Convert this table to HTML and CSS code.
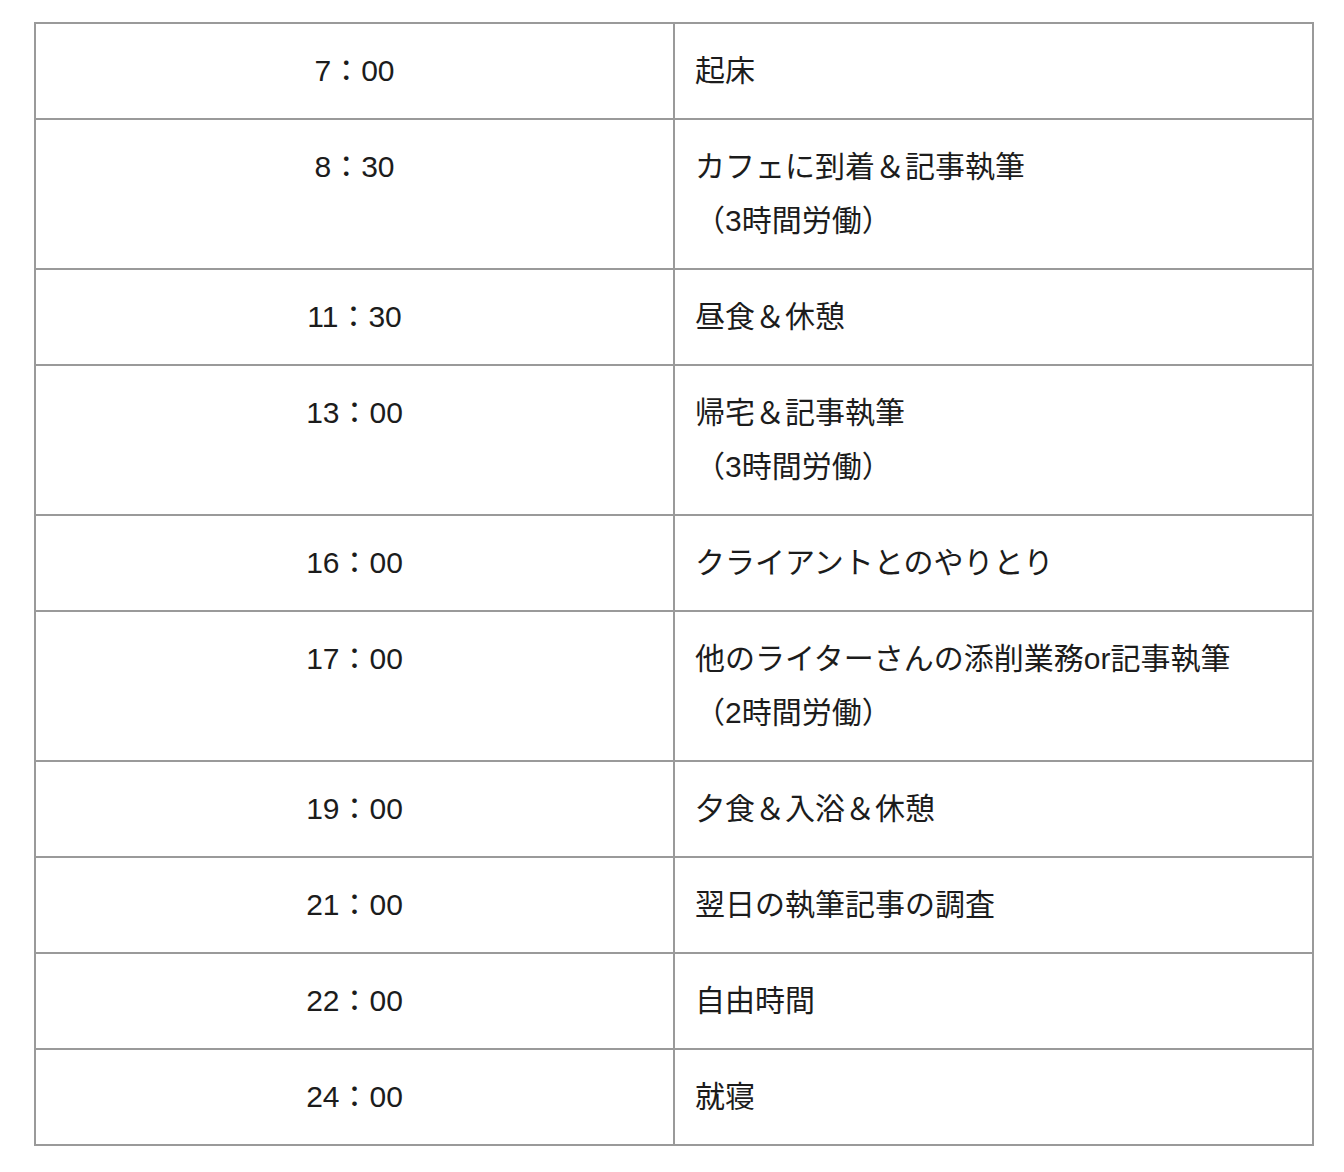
FILE: index.html
```html
<!DOCTYPE html>
<html lang="ja">
<head>
<meta charset="utf-8">
<link rel="stylesheet" href="styles.css">
</head>
<body>
<table class="schedule">
<colgroup><col class="col-half"><col class="col-half"></colgroup>
<tbody>
<tr><td class="time">7：00</td><td class="task">起床</td></tr>
<tr><td class="time">8：30</td><td class="task">カフェに到着＆記事執筆<br>（3時間労働）</td></tr>
<tr><td class="time">11：30</td><td class="task">昼食＆休憩</td></tr>
<tr><td class="time">13：00</td><td class="task">帰宅＆記事執筆<br>（3時間労働）</td></tr>
<tr><td class="time">16：00</td><td class="task">クライアントとのやりとり</td></tr>
<tr><td class="time">17：00</td><td class="task">他のライターさんの添削業務or記事執筆<br>（2時間労働）</td></tr>
<tr><td class="time">19：00</td><td class="task">夕食＆入浴＆休憩</td></tr>
<tr><td class="time">21：00</td><td class="task">翌日の執筆記事の調査</td></tr>
<tr><td class="time">22：00</td><td class="task">自由時間</td></tr>
<tr><td class="time">24：00</td><td class="task">就寝</td></tr>
</tbody>
</table>
</body>
</html>
```
FILE: styles.css
```css
html, body {
  margin: 0;
  background: #fff;
}
body {
  padding: 22px 30px 0 34px;
  font-family: "Liberation Sans", "Noto Sans CJK JP", sans-serif;
  color: #1c1c1c;
}
.schedule {
  width: 1280px;
  border-collapse: collapse;
  table-layout: fixed;
  border: 2px solid #9a9a9a;
}
.col-half {
  width: 50%;
}
.schedule td {
  border: 2px solid #9a9a9a;
  padding: 20px 20px;
  font-size: 30px;
  line-height: 54px;
  vertical-align: top;
}
.schedule .time {
  text-align: center;
}
.schedule .task {
  text-align: left;
}
```
